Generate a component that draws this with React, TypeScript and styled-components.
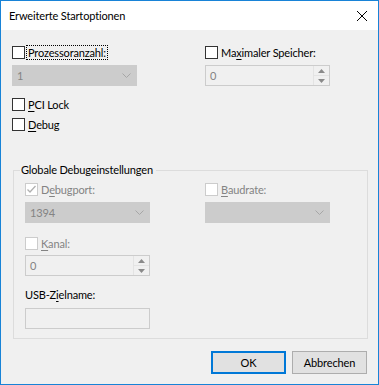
import React from 'react';
import styled, { createGlobalStyle } from 'styled-components';

const FONT = `Lato, "Noto Sans", sans-serif`;

const Global = createGlobalStyle`
  html, body { margin: 0; padding: 0; background: #f0f0f0; }
  body { font-family: ${FONT}; font-size: 11px; }
`;

const Window = styled.div`
  box-sizing: border-box;
  width: 379px;
  height: 385px;
  border: 1px solid #1883d7;
  background: #f0f0f0;
  display: flex;
  flex-direction: column;
  font-family: ${FONT};
  font-size: 11px;
  letter-spacing: -0.15px;
  color: #000;
`;

const TitleBar = styled.div`
  height: 29px;
  flex: none;
  background: #ffffff;
  display: flex;
  align-items: center;
  justify-content: space-between;
  padding: 0 11px 0 8px;
`;

const Title = styled.span`
  font-size: 11px;
  line-height: 16px;
  color: #000;
`;

const Client = styled.div`
  flex: 1;
  display: flex;
  flex-direction: column;
  padding: 16px 10px 0 11px;
`;

const TwoCol = styled.div<{ $gap: number }>`
  display: grid;
  grid-template-columns: 125px 125px;
  column-gap: ${p => p.$gap}px;
  align-items: start;
`;

const Stack = styled.div`
  display: flex;
  flex-direction: column;
`;

const CheckRow = styled.div<{ $mt?: number }>`
  display: flex;
  align-items: center;
  height: 13px;
  margin-top: ${p => p.$mt ?? 0}px;
  white-space: nowrap;
`;

const Box = styled.span<{ $disabled?: boolean }>`
  box-sizing: border-box;
  flex: none;
  width: 13px;
  height: 13px;
  border: 1px solid ${p => (p.$disabled ? '#cccccc' : '#333333')};
  background: #ffffff;
  display: inline-flex;
  align-items: center;
  justify-content: center;
`;

const Label = styled.span<{ $disabled?: boolean; $focus?: boolean }>`
  margin-left: 2px;
  padding: 0 1px;
  line-height: 13px;
  color: ${p => (p.$disabled ? '#838383' : '#000')};
  outline: ${p => (p.$focus ? '1px dotted #000' : 'none')};
`;

const Key = styled.span`
  text-decoration: underline;
  text-underline-offset: 2px;
`;

const Combo = styled.div<{ $mt?: number }>`
  box-sizing: border-box;
  width: 125px;
  height: 21px;
  margin-top: ${p => p.$mt ?? 0}px;
  background: #cccccc;
  border: 1px solid #cccccc;
  display: flex;
  align-items: center;
  justify-content: space-between;
  padding: 0 5px 0 4px;
  color: #838383;
`;

const Spin = styled.div<{ $mt?: number }>`
  box-sizing: border-box;
  width: 125px;
  height: 21px;
  margin-top: ${p => p.$mt ?? 0}px;
  background: #f0f0f0;
  border: 1px solid #cccccc;
  display: flex;
  align-items: stretch;
  color: #838383;
`;

const SpinText = styled.span`
  flex: 1;
  display: flex;
  align-items: center;
  padding-left: 4px;
`;

const SpinButtons = styled.div`
  width: 15px;
  display: flex;
  flex-direction: column;
  border-left: 1px solid #e3e3e3;
`;

const SpinBtn = styled.div<{ $top?: boolean }>`
  flex: 1;
  display: flex;
  align-items: center;
  justify-content: center;
  border-bottom: ${p => (p.$top ? '1px solid #e3e3e3' : 'none')};
`;

const TextBox = styled.div<{ $mt?: number }>`
  box-sizing: border-box;
  width: 125px;
  height: 21px;
  margin-top: ${p => p.$mt ?? 0}px;
  background: #f0f0f0;
  border: 1px solid #cccccc;
`;

const PlainLabel = styled.div<{ $mt?: number }>`
  line-height: 16px;
  margin-top: ${p => p.$mt ?? 0}px;
  white-space: nowrap;
`;

const Group = styled.fieldset`
  margin: 31px 0 0 1px;
  width: 355px;
  box-sizing: border-box;
  border: 1px solid #dcdcdc;
  padding: 5px 11px 9px 11px;
  min-width: 0;
`;

const Legend = styled.legend`
  padding: 0 3px 0 1px;
  margin-left: -5px;
  line-height: 16px;
  font-size: 11px;
`;

const ButtonRow = styled.div`
  display: flex;
  justify-content: flex-end;
  gap: 6px;
  margin-top: 12px;
  padding-right: 1px;
`;

const Button = styled.div<{ $default?: boolean }>`
  box-sizing: border-box;
  width: 75px;
  height: 23px;
  background: #e1e1e1;
  border: ${p => (p.$default ? '2px solid #0078d7' : '1px solid #adadad')};
  display: flex;
  align-items: center;
  justify-content: center;
  font-size: 11px;
`;

const Chevron = () => (
  <svg width="9" height="5" viewBox="0 0 9 5">
    <path d="M0.5 0.5 L4.5 4.5 L8.5 0.5" fill="none" stroke="#a6a6a6" strokeWidth="1" />
  </svg>
);

const Up = () => (
  <svg width="7" height="4" viewBox="0 0 7 4">
    <path d="M0 4 L3.5 0 L7 4 Z" fill="#8a8a8a" />
  </svg>
);
const Down = () => (
  <svg width="7" height="4" viewBox="0 0 7 4">
    <path d="M0 0 L3.5 4 L7 0 Z" fill="#8a8a8a" />
  </svg>
);

const CloseIcon = () => (
  <svg width="10" height="10" viewBox="0 0 10 10">
    <path d="M0 0 L10 10 M10 0 L0 10" stroke="#000" strokeWidth="1" />
  </svg>
);

const Check = () => (
  <svg width="11" height="11" viewBox="0 0 11 11">
    <path d="M1.5 5.5 L4 8 L9.5 2" fill="none" stroke="#b0b0b0" strokeWidth="1.3" />
  </svg>
);

const Checkbox: React.FC<{
  disabled?: boolean;
  checked?: boolean;
  focus?: boolean;
  mt?: number;
  children: React.ReactNode;
}> = ({ disabled, checked, focus, mt, children }) => (
  <CheckRow $mt={mt}>
    <Box $disabled={disabled}>{checked && <Check />}</Box>
    <Label $disabled={disabled} $focus={focus}>
      {children}
    </Label>
  </CheckRow>
);

const SpinBox: React.FC<{ value: string; mt?: number }> = ({ value, mt }) => (
  <Spin $mt={mt}>
    <SpinText>{value}</SpinText>
    <SpinButtons>
      <SpinBtn $top>
        <Up />
      </SpinBtn>
      <SpinBtn>
        <Down />
      </SpinBtn>
    </SpinButtons>
  </Spin>
);

export default function App() {
  return (
    <>
      <Global />
      <Window>
        <TitleBar>
          <Title>Erweiterte Startoptionen</Title>
          <CloseIcon />
        </TitleBar>
        <Client>
          <TwoCol $gap={68}>
            <Stack>
              <Checkbox focus>
                Prozessoran<Key>z</Key>ahl:
              </Checkbox>
              <Combo $mt={6}>
                <span>1</span>
                <Chevron />
              </Combo>
              <Checkbox mt={12}>
                <Key>P</Key>CI Lock
              </Checkbox>
              <Checkbox mt={7}>
                <Key>D</Key>ebug
              </Checkbox>
            </Stack>
            <Stack>
              <Checkbox>
                Ma<Key>x</Key>imaler Speicher:
              </Checkbox>
              <SpinBox value="0" mt={6} />
            </Stack>
          </TwoCol>
          <Group>
            <Legend>Globale Debugeinstellungen</Legend>
            <TwoCol $gap={55}>
              <Stack>
                <Checkbox disabled checked>
                  D<Key>e</Key>bugport:
                </Checkbox>
                <Combo $mt={6}>
                  <span>1394</span>
                  <Chevron />
                </Combo>
                <Checkbox disabled mt={14}>
                  <Key>K</Key>anal:
                </Checkbox>
                <SpinBox value="0" mt={5} />
                <PlainLabel $mt={11}>
                  USB-Z<Key>i</Key>elname:
                </PlainLabel>
                <TextBox $mt={5} />
              </Stack>
              <Stack>
                <Checkbox disabled>
                  <Key>B</Key>audrate:
                </Checkbox>
                <Combo $mt={6}>
                  <span />
                  <Chevron />
                </Combo>
              </Stack>
            </TwoCol>
          </Group>
          <ButtonRow>
            <Button $default>OK</Button>
            <Button>Abbrechen</Button>
          </ButtonRow>
        </Client>
      </Window>
    </>
  );
}
